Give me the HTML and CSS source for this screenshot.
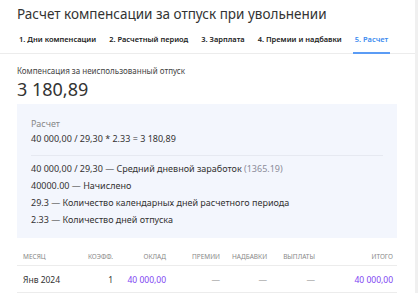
FILE: index.html
```html
<!DOCTYPE html>
<html lang="ru">
<head>
  <meta charset="UTF-8">
  <title>Расчет компенсации</title>
  <link rel="stylesheet" href="styles.css">
</head>
<body>
  <div class="page">
    <h1 class="title">Расчет компенсации за отпуск при увольнении</h1>
    <nav class="tabs">
      <span class="tab">1. Дни компенсации</span>
      <span class="tab">2. Расчетный период</span>
      <span class="tab">3. Зарплата</span>
      <span class="tab">4. Премии и надбавки</span>
      <span class="tab active">5. Расчет</span>
    </nav>

    <div class="content">
      <div class="result-label">Компенсация за неиспользованный отпуск</div>
      <div class="result-value">3 180,89</div>

      <div class="calc">
        <div class="calc-title">Расчет</div>
        <div class="calc-formula">40 000,00 / 29,30 * 2.33 = 3 180,89</div>
        <div class="calc-lines">
          <div>40 000,00 / 29,30 — Средний дневной заработок <span class="muted">(1365.19)</span></div>
          <div>40000.00 — Начислено</div>
          <div>29.3 — Количество календарных дней расчетного периода</div>
          <div>2.33 — Количество дней отпуска</div>
        </div>
      </div>

      <table class="months">
        <colgroup>
          <col style="width:53px"><col style="width:49px"><col style="width:53px"><col style="width:54px"><col style="width:47px"><col style="width:48px"><col style="width:76px">
        </colgroup>
        <thead>
          <tr>
            <th class="left">Месяц</th>
            <th>Коэфф.</th>
            <th>Оклад</th>
            <th>Премии</th>
            <th>Надбавки</th>
            <th>Выплаты</th>
            <th>Итого</th>
          </tr>
        </thead>
        <tbody>
          <tr>
            <td class="left">Янв 2024</td>
            <td>1</td>
            <td class="money">40 000,00</td>
            <td class="dash">—</td>
            <td class="dash">—</td>
            <td class="dash">—</td>
            <td class="money">40 000,00</td>
          </tr>
        </tbody>
      </table>
    </div>
  </div>
</body>
</html>
```
FILE: styles.css
```css
body {
  margin: 0;
  font-family: "Noto Sans", "Open Sans", sans-serif;
  color: #2b2b2b;
  background-color: #f0f0f0;
  overflow: hidden;
}

.page {
  width: 415px;
  height: 293px;
  background-color: #fff;
  overflow: hidden;
}

.title {
  margin: 0;
  padding: 4px 0 0 17px;
  font-size: 13.5px;
  font-weight: 400;
  color: #333;
  line-height: 20px;
}

.tabs {
  display: flex;
  gap: 13px;
  padding: 0 0 0 19px;
  margin-top: 6px;
  border-bottom: 1px solid #ececec;
  white-space: nowrap;
}

.tab {
  font-size: 7.5px;
  font-weight: 600;
  color: #222;
  padding: 3px 0 8px;
  line-height: 12px;
}

.tab.active {
  color: #3d8bf0;
  border-bottom: 2px solid #5b9cf5;
  margin-bottom: -1px;
  padding: 3px 2px 7px;
  margin-left: -2px;
}

.content {
  padding: 11px 18px 0 17px;
}

.result-label {
  font-size: 8px;
  color: #444;
  line-height: 12px;
}

.result-value {
  font-size: 18px;
  color: #333;
  line-height: 24px;
}

.calc {
  background-color: #f3f6fd;
  margin-top: 3px;
  padding: 14px 14px 10px;
  font-size: 9px;
  color: #333;
}

.calc-title {
  color: #888;
  line-height: 12px;
}

.calc-formula {
  line-height: 12px;
  margin-top: 3px;
  padding-bottom: 10px;
  border-bottom: 1px solid #e6e9f1;
}

.calc-lines {
  padding-top: 4px;
}

.calc-lines div {
  line-height: 17px;
}

.muted {
  color: #8b8b99;
}

.months {
  width: 380px;
  table-layout: fixed;
  border-collapse: collapse;
  margin-top: 9px;
  white-space: nowrap;
}

.months th {
  font-size: 6.5px;
  font-weight: 400;
  color: #888;
  text-transform: uppercase;
  text-align: right;
  height: 18px;
  padding: 0 6px;
  border-bottom: 1px solid #ececec;
}

.months td {
  font-size: 8.5px;
  color: #333;
  text-align: right;
  height: 26px;
  padding: 0 6px;
  border-bottom: 1px solid #ececec;
}

.months th:last-child, .months td:last-child {
  padding-right: 4px;
}

.months .left {
  text-align: left;
}

.months td.money {
  color: #7e3ff2;
}

.months td.dash {
  color: #aaa;
}
```
